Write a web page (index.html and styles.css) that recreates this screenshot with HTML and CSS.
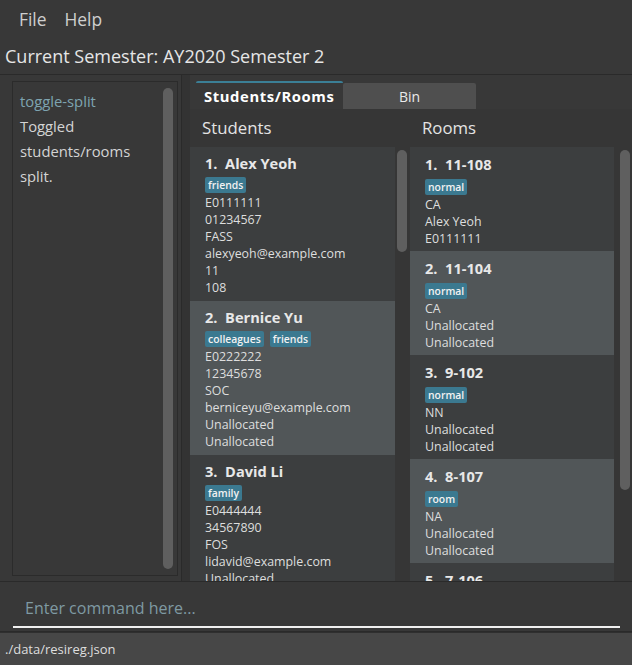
FILE: index.html
```html
<!DOCTYPE html>
<html>
<head>
<meta charset="utf-8">
<link rel="stylesheet" href="styles.css">
</head>
<body>
<div class="app">
  <div class="menubar"><span class="menu">File</span><span class="menu">Help</span></div>
  <div class="semester">Current Semester: AY2020 Semester 2</div>
  <div class="main">
    <div class="left">
      <div class="result">
        <div class="result-text">
          <div class="cmd">toggle-split</div>
          <div>Toggled</div>
          <div>students/rooms</div>
          <div>split.</div>
        </div>
        <div class="vscroll"><div class="thumb thumb-full"></div></div>
      </div>
    </div>
    <div class="right">
      <div class="tabs">
        <div class="tab active">Students/Rooms</div>
        <div class="tab">Bin</div>
      </div>
      <div class="split">
        <div class="col">
          <div class="col-title">Students</div>
          <div class="listwrap">
            <div class="list">
              <div class="card">
                <div class="name">1.&nbsp; Alex Yeoh</div>
                <div class="tags"><span class="tag">friends</span></div>
                <div class="line">E0111111</div>
                <div class="line">01234567</div>
                <div class="line">FASS</div>
                <div class="line">alexyeoh@example.com</div>
                <div class="line">11</div>
                <div class="line">108</div>
              </div>
              <div class="card alt">
                <div class="name">2.&nbsp; Bernice Yu</div>
                <div class="tags"><span class="tag">colleagues</span><span class="tag">friends</span></div>
                <div class="line">E0222222</div>
                <div class="line">12345678</div>
                <div class="line">SOC</div>
                <div class="line">berniceyu@example.com</div>
                <div class="line">Unallocated</div>
                <div class="line">Unallocated</div>
              </div>
              <div class="card">
                <div class="name">3.&nbsp; David Li</div>
                <div class="tags"><span class="tag">family</span></div>
                <div class="line">E0444444</div>
                <div class="line">34567890</div>
                <div class="line">FOS</div>
                <div class="line">lidavid@example.com</div>
                <div class="line">Unallocated</div>
                <div class="line">Unallocated</div>
              </div>
            </div>
            <div class="vscroll list-scroll"><div class="thumb thumb-students"></div></div>
          </div>
        </div>
        <div class="col rooms">
          <div class="col-title">Rooms</div>
          <div class="listwrap">
            <div class="list">
              <div class="card room">
                <div class="name">1.&nbsp; 11-108</div>
                <div class="tags"><span class="tag">normal</span></div>
                <div class="line">CA</div>
                <div class="line">Alex Yeoh</div>
                <div class="line">E0111111</div>
              </div>
              <div class="card room alt">
                <div class="name">2.&nbsp; 11-104</div>
                <div class="tags"><span class="tag">normal</span></div>
                <div class="line">CA</div>
                <div class="line">Unallocated</div>
                <div class="line">Unallocated</div>
              </div>
              <div class="card room">
                <div class="name">3.&nbsp; 9-102</div>
                <div class="tags"><span class="tag">normal</span></div>
                <div class="line">NN</div>
                <div class="line">Unallocated</div>
                <div class="line">Unallocated</div>
              </div>
              <div class="card room alt">
                <div class="name">4.&nbsp; 8-107</div>
                <div class="tags"><span class="tag">room</span></div>
                <div class="line">NA</div>
                <div class="line">Unallocated</div>
                <div class="line">Unallocated</div>
              </div>
              <div class="card room">
                <div class="name">5.&nbsp; 7-106</div>
                <div class="tags"><span class="tag">normal</span></div>
                <div class="line">NA</div>
                <div class="line">Unallocated</div>
                <div class="line">Unallocated</div>
              </div>
            </div>
            <div class="vscroll list-scroll"><div class="thumb thumb-rooms"></div></div>
          </div>
        </div>
      </div>
    </div>
  </div>
  <div class="command">
    <div class="cmd-input">Enter command here...</div>
  </div>
  <div class="status">./data/resireg.json</div>
</div>
</body>
</html>
```

FILE: styles.css
```css
html, body {
  margin: 0;
  padding: 0;
  background: #383838;
}
body {
  font-family: "Open Sans", "Noto Sans", sans-serif;
  color: #dcdcdc;
}
.app {
  width: 632px;
  height: 665px;
  display: flex;
  flex-direction: column;
  overflow: hidden;
}
.menubar {
  height: 40px;
  display: flex;
  align-items: center;
  padding-left: 19px;
  padding-bottom: 3px;
  box-sizing: border-box;
  gap: 18px;
  font-size: 17.4px;
  color: #cfcfcf;
  flex: none;
}
.semester {
  height: 34px;
  display: flex;
  align-items: center;
  padding-left: 5px;
  padding-bottom: 3px;
  box-sizing: border-box;
  font-size: 18px;
  color: #e6e6e6;
  flex: none;
}
.main {
  height: 506px;
  flex: none;
  display: flex;
  border-top: 1px solid #2a2a2a;
  border-bottom: 1px solid #2a2a2a;
}
.left {
  width: 182px;
  flex: none;
  padding: 6px 3px 5px 12px;
  box-sizing: border-box;
  border-right: 1px solid #2a2a2a;
}
.result {
  height: 100%;
  box-sizing: border-box;
  border: 1px solid #2b2b2b;
  display: flex;
  padding: 6px 4px 6px 7px;
}
.result-text {
  flex: 1;
  font-size: 14.8px;
  line-height: 25px;
  color: #d4d4d4;
  padding-top: 1px;
}
.result-text .cmd {
  color: #7ea4b0;
}
.vscroll {
  width: 10px;
  flex: none;
  display: flex;
  flex-direction: column;
}
.thumb {
  background: #5f5f5f;
  border-radius: 5px;
}
.thumb-full {
  flex: 1;
}
.right {
  flex: 1;
  display: flex;
  flex-direction: column;
  border-left: 8px solid #333;
  min-width: 0;
}
.tabs {
  display: flex;
  padding: 6px 0 0 6px;
  height: 34px;
  box-sizing: border-box;
  flex: none;
}
.tab {
  box-sizing: border-box;
  display: flex;
  align-items: center;
  justify-content: center;
  font-size: 14px;
  color: #eaeaea;
  background: #4f4f4f;
  width: 133px;
  margin-top: 2px;
  height: 26px;
  border-radius: 2px 2px 0 0;
}
.tab.active {
  width: 147px;
  margin-top: 0;
  height: 28px;
  background: transparent;
  border-top: 2px solid #3b7f96;
  font-weight: 700;
  font-size: 14.8px;
  letter-spacing: 0.6px;
  justify-content: flex-start;
  padding-left: 8px;
  color: #ffffff;
}
.split {
  flex: 1;
  display: flex;
  min-height: 0;
  background: #363636;
}
.col {
  width: 220px;
  flex: none;
  display: flex;
  flex-direction: column;
  min-height: 0;
}
.col.rooms {
  flex: 1;
  width: auto;
}
.col-title {
  height: 38px;
  flex: none;
  display: flex;
  align-items: center;
  padding-left: 12px;
  font-size: 16.8px;
  color: #e4e4e4;
  box-sizing: border-box;
  padding-bottom: 2px;
}
.listwrap {
  flex: 1;
  display: flex;
  min-height: 0;
}
.list {
  width: 205px;
  flex: none;
  overflow: hidden;
  background: #3c3e3f;
}
.rooms .list {
  width: 204px;
}
.list-scroll {
  margin-left: 2px;
  padding-top: 3px;
}
.rooms .list-scroll {
  margin-left: 6px;
}
.thumb-students {
  height: 102px;
}
.thumb-rooms {
  height: 340px;
}
.card {
  background: #3c3e3f;
  padding: 6px 12px 4px 15px;
  height: 154px;
  box-sizing: border-box;
}
.card.room {
  height: 104px;
}
.card.alt {
  background: #515658;
}
.name {
  font-size: 14.6px;
  font-weight: 700;
  line-height: 21px;
  color: #e8e8e8;
  white-space: nowrap;
}
.room .name {
  line-height: 22px;
}
.tags {
  display: flex;
  gap: 6px;
  margin-top: 3px;
  margin-bottom: 1px;
  height: 16px;
}
.room .tags {
  margin-top: 4px;
}
.tag {
  background: #3b7990;
  color: #f2f2f2;
  font-size: 10.4px;
  font-weight: 600;
  line-height: 16px;
  padding: 0 3px;
  border-radius: 2px;
}
.line {
  font-size: 12.4px;
  line-height: 17px;
  color: #dedede;
  white-space: nowrap;
}
.command {
  height: 50px;
  flex: none;
  box-sizing: border-box;
  padding: 15px 12px 0 13px;
  border-bottom: 1px solid #2a2a2a;
}
.cmd-input {
  height: 31px;
  box-sizing: border-box;
  border-bottom: 2px solid #f0f0f0;
  font-size: 16px;
  color: #7f9aa3;
  padding-left: 12px;
  line-height: 22px;
}
.status {
  flex: 1;
  background: #474747;
  font-size: 13px;
  color: #dedede;
  padding-left: 5px;
  display: flex;
  align-items: center;
  border-top: 1px solid #2f2f2f;
}
```
